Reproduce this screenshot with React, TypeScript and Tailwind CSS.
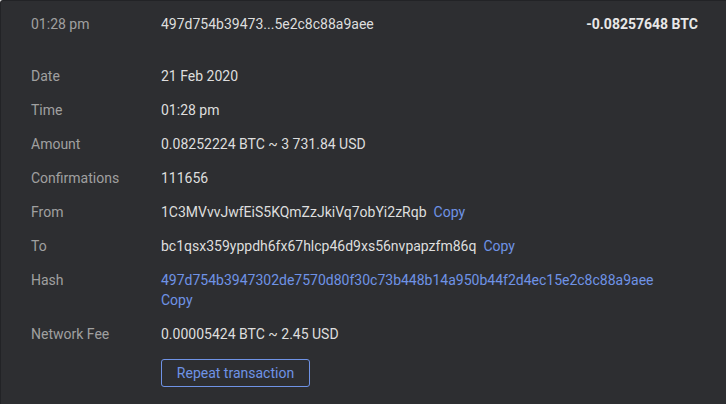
const rows: { label: string; value: string; copy?: boolean }[] = [
  { label: "Date", value: "21 Feb 2020" },
  { label: "Time", value: "01:28 pm" },
  { label: "Amount", value: "0.08252224 BTC ~ 3 731.84 USD" },
  { label: "Confirmations", value: "111656" },
  { label: "From", value: "1C3MVvvJwfEiS5KQmZzJkiVq7obYi2zRqb", copy: true },
  { label: "To", value: "bc1qsx359yppdh6fx67hlcp46d9xs56nvpapzfm86q", copy: true },
];

export default function App() {
  return (
    <div className="w-[726px] h-[404px] bg-[#2d2e31] border-t border-l border-[#222326] rounded-tl-[3px] overflow-hidden font-['Roboto',sans-serif] text-[14px] leading-5 text-[#dedede]">
      {/* Summary row */}
      <div className="flex pt-[13px] pl-[30px] pr-[28px]">
        <span className="w-[130px] text-[#a0a0a0]">01:28 pm</span>
        <span className="flex-1">497d754b39473...5e2c8c88a9aee</span>
        <span className="font-bold text-[#e8e8e8]">-0.08257648 BTC</span>
      </div>

      {/* Details */}
      <div className="pl-[30px] pt-[32px] flex flex-col gap-[14px]">
        {rows.map((r) => (
          <div key={r.label} className="flex">
            <span className="w-[130px] text-[#a0a0a0]">{r.label}</span>
            <span>
              {r.value}
              {r.copy && <span className="ml-[7px] text-[#6f93e6]">Copy</span>}
            </span>
          </div>
        ))}
        <div className="flex">
          <span className="w-[130px] text-[#a0a0a0]">Hash</span>
          <div className="flex flex-col text-[#6f93e6]">
            <span>497d754b3947302de7570d80f30c73b448b14a950b44f2d4ec15e2c8c88a9aee</span>
            <span>Copy</span>
          </div>
        </div>
        <div className="flex">
          <span className="w-[130px] text-[#a0a0a0]">Network Fee</span>
          <span>0.00005424 BTC ~ 2.45 USD</span>
        </div>
        <div className="pl-[130px] pt-[1px]">
          <button className="h-[28px] w-[149px] border border-[#6f93e6] rounded-[3px] text-[#6f93e6] text-[14px]">
            Repeat transaction
          </button>
        </div>
      </div>
    </div>
  );
}
